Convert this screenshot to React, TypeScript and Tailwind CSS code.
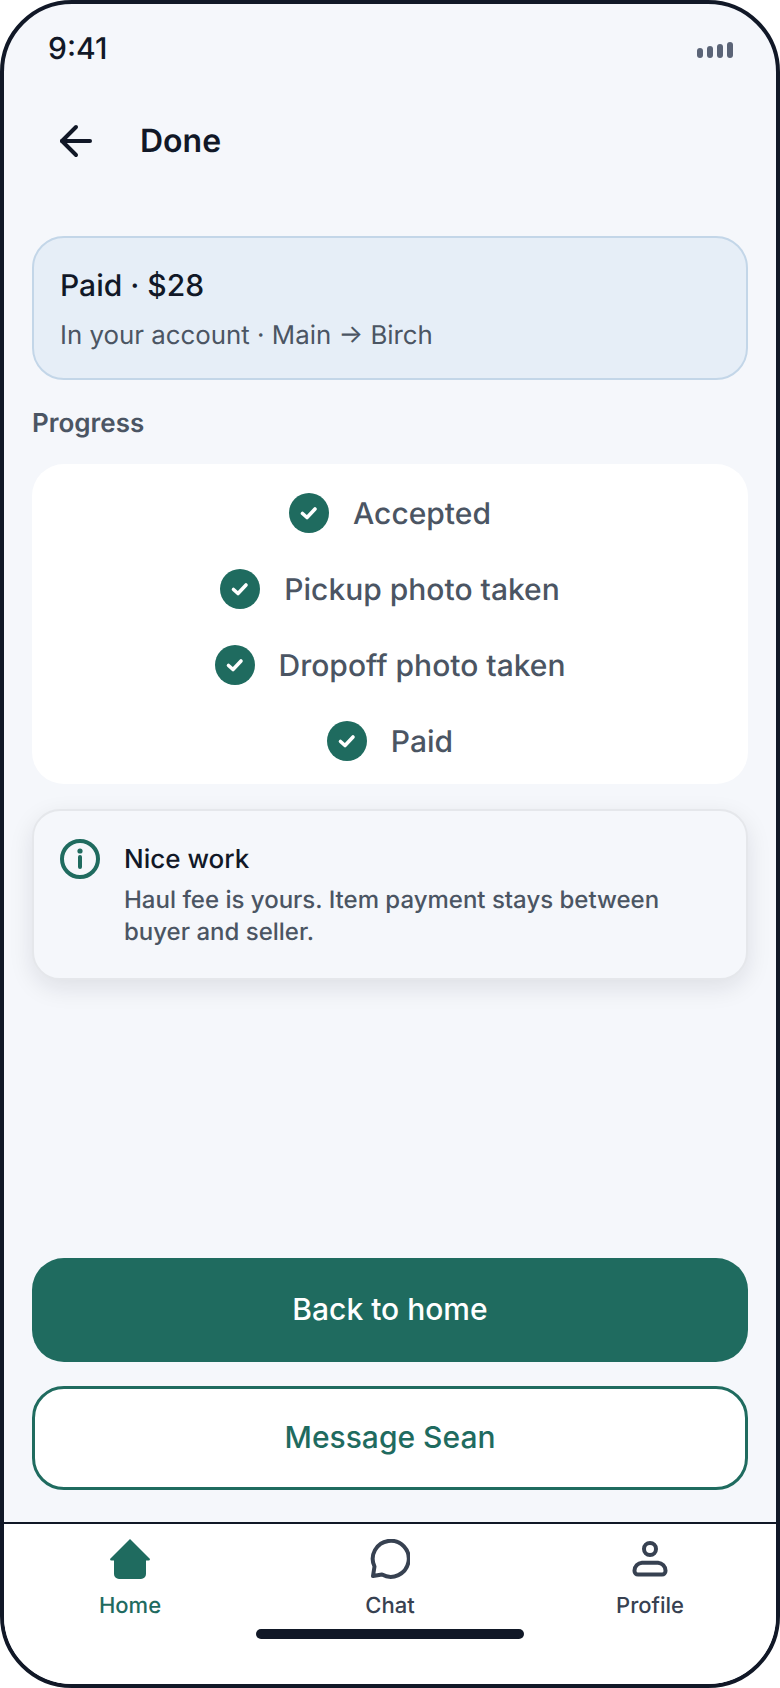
import React from "react";
import { ArrowLeft } from "lucide-react";

function Check() {
  return (
    <svg width="40" height="40" viewBox="0 0 40 40" className="shrink-0">
      <circle cx="20" cy="20" r="20" fill="#1f6b5f" />
      <path d="M13.5 20.5 L18 24.5 L26 16" fill="none" stroke="#fff" strokeWidth="3.6" strokeLinecap="round" strokeLinejoin="round" />
    </svg>
  );
}

function Step({ label }: { label: string }) {
  return (
    <div className="flex items-center justify-center gap-[24px] h-[44px]">
      <Check />
      <span className="text-[30px] leading-[44px] pt-[2px] font-medium text-[#4b5563]">{label}</span>
    </div>
  );
}

export default function App() {
  return (
    <div className="w-[780px] h-[1688px] bg-white font-['Inter',sans-serif] [text-rendering:geometricPrecision]">
      <div className="w-full h-full border-[4px] border-[#111827] rounded-[72px] overflow-hidden bg-[#f5f7fb] flex flex-col">
        <div className="h-[92px] shrink-0 flex items-center justify-between pl-[44px] pr-[41px] pb-[3px]">
          <span className="text-[30px] leading-[40px] font-medium text-[#111827]">9:41</span>
          <svg width="38" height="16" viewBox="0 0 38 16" className="mt-[3px]">
            <rect x="0" y="6" width="6" height="10" rx="3" fill="#5b6477" />
            <rect x="10" y="4" width="6" height="12" rx="3" fill="#5b6477" />
            <rect x="20" y="2" width="6" height="14" rx="3" fill="#5b6477" />
            <rect x="30" y="0" width="6" height="16" rx="3" fill="#5b6477" />
          </svg>
        </div>
        <div className="h-[92px] shrink-0 flex items-center pl-[48px] gap-[40px] pb-[2px]">
          <ArrowLeft size={48} strokeWidth={2} color="#111827" />
          <span className="text-[32px] leading-[44px] font-semibold text-[#111827]">Done</span>
        </div>
        <div className="flex-1 flex flex-col px-[28px] pt-[48px]">
          <div className="h-[144px] shrink-0 rounded-[32px] border-2 border-[#c3d6e8] bg-[#e6eef7] px-[26px] pt-[28px]">
            <div className="text-[30px] leading-[40px] font-[450] text-[#111827]">Paid · $28</div>
            <div className="mt-[10px] text-[25.85px] leading-[40px] text-[#4b5563]">In your account · Main → Birch</div>
          </div>
          <div className="mt-[26px] text-[26px] leading-[36px] font-semibold text-[#4b5563]">Progress</div>
          <div className="mt-[22px] h-[320px] shrink-0 rounded-[32px] bg-white pt-[27px] flex flex-col gap-[32px]">
            <Step label="Accepted" />
            <Step label="Pickup photo taken" />
            <Step label="Dropoff photo taken" />
            <Step label="Paid" />
          </div>
          <div className="mt-[25px] h-[171px] shrink-0 rounded-[28px] border-2 border-[#e5e7eb] bg-[#f5f7fb] shadow-[0_8px_24px_rgba(17,24,39,0.10)] flex gap-[24px] pl-[26px] pt-[28px]">
            <svg width="40" height="40" viewBox="0 0 40 40" fill="none" className="shrink-0">
              <circle cx="20" cy="20" r="18" stroke="#1f6b5f" strokeWidth="4" />
              <circle cx="20" cy="12" r="2.6" fill="#1f6b5f" />
              <path d="M20 18 V28" stroke="#1f6b5f" strokeWidth="4" strokeLinecap="round" />
            </svg>
            <div className="w-[570px]">
              <div className="text-[26px] leading-[36px] font-[450] text-[#111827] mt-[3px]">Nice work</div>
              <div className="mt-[6px] text-[24px] leading-[32px] font-[450] text-[#4b5563]">Haul fee is yours. Item payment stays between buyer and seller.</div>
            </div>
          </div>
          <div className="mt-auto flex flex-col gap-[24px] pb-[32px]">
            <button className="h-[104px] rounded-[32px] bg-[#1f6b5f] text-white text-[30px] font-[450] pb-[2px]">Back to home</button>
            <button className="h-[104px] rounded-[32px] border-[3px] border-[#1f6b5f] bg-white text-[#1f6b5f] text-[30px] font-[450] pb-[2px]">Message Sean</button>
          </div>
        </div>
        <div className="h-[162px] shrink-0 bg-white border-t-2 border-[#111827] flex flex-col items-center">
          <div className="w-full grid grid-cols-[260px_260px_260px] justify-center pt-[15px]">
            <div className="flex flex-col items-center gap-[11px] text-[#1f6b5f]">
              <svg width="40" height="40" viewBox="0 0 40 40">
                <path d="M20 0 L40 20 Q40 21.5 38.5 21.5 H36 V35 A5 5 0 0 1 31 40 H9 A5 5 0 0 1 4 35 V21.5 H1.5 Q0 21.5 0 20 Z" fill="#1f6b5f" />
              </svg>
              <span className="text-[22px] leading-[32px] font-[450]">Home</span>
            </div>
            <div className="flex flex-col items-center gap-[11px] text-[#374151]">
              <svg width="40" height="40" viewBox="0 0 40 40" fill="none">
                <path d="M12 35.5 A18 18 0 1 0 4.5 27.5 L3 37 Z" stroke="#374151" strokeWidth="4" strokeLinejoin="round" />
              </svg>
              <span className="text-[22px] leading-[32px] font-[450]">Chat</span>
            </div>
            <div className="flex flex-col items-center gap-[11px] text-[#374151]">
              <svg width="40" height="40" viewBox="0 0 40 40" fill="none" stroke="#374151" strokeWidth="4">
                <circle cx="20" cy="10" r="6" />
                <path d="M12 23.7 H28 A8 8 0 0 1 35.5 31.5 V32 A3.5 3.5 0 0 1 32 35.5 H8 A3.5 3.5 0 0 1 4.5 32 V31.5 A8 8 0 0 1 12 23.7 Z" />
              </svg>
              <span className="text-[22px] leading-[32px] font-[450]">Profile</span>
            </div>
          </div>
          <div className="mt-[7px] w-[268px] h-[10px] rounded-full bg-[#111827]" />
        </div>
      </div>
    </div>
  );
}
